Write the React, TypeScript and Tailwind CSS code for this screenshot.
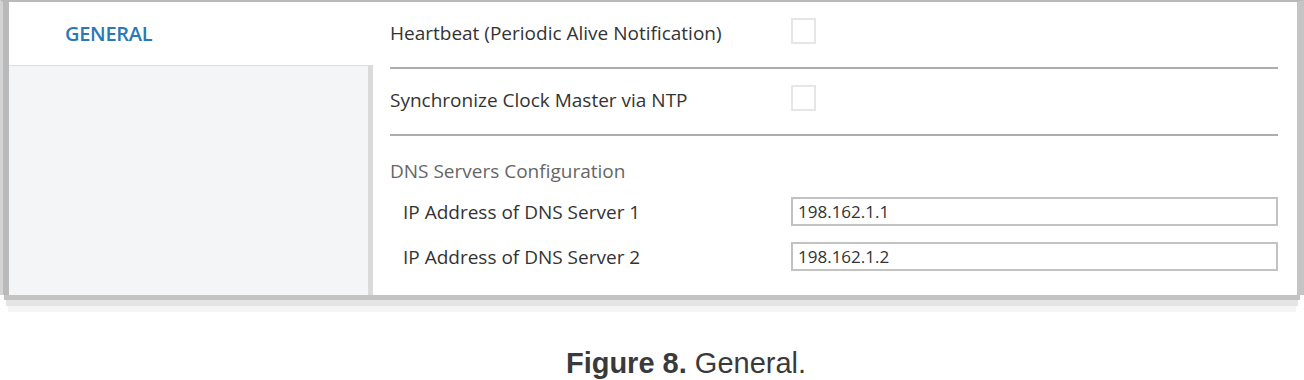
import React from 'react'

const ui = "font-['Open_Sans','Noto_Sans',sans-serif]"

function CheckRow({ label }: { label: string }) {
  return (
    <div className="h-[65px] flex items-center pb-[3px]">
      <div className="w-[401px] text-[19px] text-[#333] leading-[24px]">{label}</div>
      <div className="w-[25px] h-[26px] mb-[4px] border-2 border-[#e6e6e6] bg-white" />
    </div>
  )
}

function IpRow({ label, value }: { label: string; value: string }) {
  return (
    <div className="flex items-center h-[29px]">
      <div className="w-[401px] pl-[13px] text-[19px] text-[#333] leading-[24px]">{label}</div>
      <div className="flex-1 h-[29px] border-2 border-[#c2c2c2] flex items-center pl-[5px] text-[17px] text-[#333]">
        {value}
      </div>
    </div>
  )
}

export default function App() {
  return (
    <div className={`w-[1304px] h-[380px] bg-white ${ui}`}>
      {/* Window */}
      <div className="h-[295px] flex border-t-2 border-[#b9b9b9] border-l-[3px] border-l-[#d4d4d4] border-r-[7px] border-r-[#c4c4c4]">
        <div className="w-[6px] bg-[#bababa]" />

        {/* Sidebar */}
        <div className="w-[364px] flex flex-col">
          <div className="h-[63px] flex items-center pl-[56px] bg-white">
            <span className="text-[20px] font-semibold text-[#2a78b8] tracking-[-0.3px]">GENERAL</span>
          </div>
          <div className="flex-1 bg-[#f4f5f7] border-t border-[#dedede] border-r-[5px] border-r-[#dadada]" />
        </div>

        {/* Content */}
        <div className="flex-1 bg-white pl-[17px] pr-[19px]">
          <CheckRow label="Heartbeat (Periodic Alive Notification)" />
          <div className="h-[2px] bg-[#adadad]" />
          <CheckRow label="Synchronize Clock Master via NTP" />
          <div className="h-[2px] bg-[#adadad]" />

          <div className="mt-[24px] h-[22px] flex items-center text-[19px] text-[#666]">
            DNS Servers Configuration
          </div>
          <div className="mt-[15px] flex flex-col gap-[16px]">
            <IpRow label="IP Address of DNS Server 1" value="198.162.1.1" />
            <IpRow label="IP Address of DNS Server 2" value="198.162.1.2" />
          </div>
        </div>
      </div>

      {/* Shadow under the window */}
      <div className="h-[5px] bg-[#c3c3c3] ml-[4px] mr-[4px]" />
      <div className="h-[6px] bg-[#e4e4e4] ml-[6px] mr-[6px]" />
      <div className="h-[6px] bg-[#f5f5f5] ml-[8px] mr-[8px]" />

      {/* Caption */}
      <div className="pt-[34px] pl-[68px] flex justify-center font-['Liberation_Sans',Arial,sans-serif] text-[29px] leading-[34px] text-[#3a3a3a]">
        <span className="font-bold">Figure 8.</span>
        <span>&nbsp;General.</span>
      </div>
    </div>
  )
}
